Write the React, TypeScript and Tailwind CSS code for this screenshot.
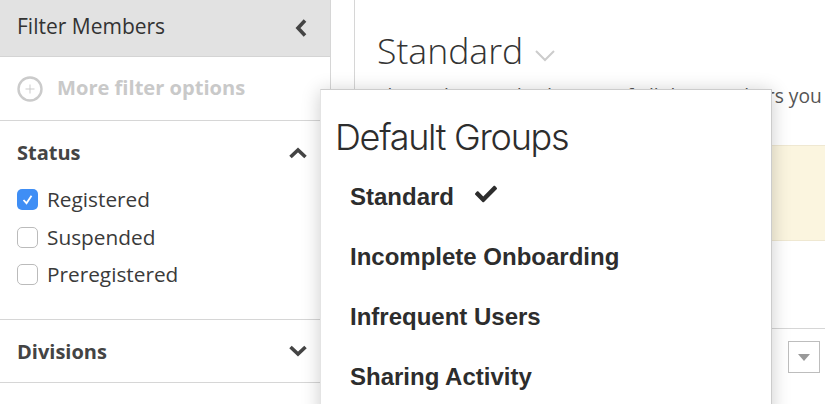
import { FaCheck } from "react-icons/fa";

const open = "font-['Open_Sans',sans-serif]";
const helv = "font-['Liberation_Sans',Arial,sans-serif]";

function Chevron({ dir }: { dir: "up" | "down" | "left" }) {
  if (dir === "left") {
    return (
      <svg width="12" height="18" viewBox="0 0 12 18" fill="none">
        <path d="M10 1.5L3 9l7 7.5" stroke="#444" strokeWidth="3.6" />
      </svg>
    );
  }
  return (
    <svg width="18" height="12" viewBox="0 0 18 12" fill="none">
      <path d={dir === "up" ? "M1.5 10L9 3l7.5 7" : "M1.5 2L9 9l7.5-7"} stroke="#444" strokeWidth="3.6" />
    </svg>
  );
}

function Checkbox({ label, checked }: { label: string; checked?: boolean }) {
  return (
    <label className="flex items-center gap-[9px] h-[37.5px]">
      {checked ? (
        <span className="w-[21px] h-[21px] rounded-[5px] bg-[#3f8ef5] flex items-center justify-center">
          <svg width="13" height="13" viewBox="0 0 13 13" fill="none">
            <path d="M2.5 7l3 3.2L10.5 2.8" stroke="#fff" strokeWidth="1.8" />
          </svg>
        </span>
      ) : (
        <span className="w-[21px] h-[21px] rounded-[5px] bg-white border border-[#bbbbbb]" />
      )}
      <span className="text-[20.8px] leading-none text-[#3a3a3a]">{label}</span>
    </label>
  );
}

function Sidebar() {
  return (
    <aside className={`w-[331px] shrink-0 h-full border-r border-[#d6d6d6] bg-white ${open}`}>
      <div className="h-[57px] bg-[#e2e2e2] border-b border-[#d4d4d4] flex items-center justify-between pl-[17px] pr-[23px]">
        <span className="text-[21px] text-[#333] mb-[2px]">Filter Members</span>
        <Chevron dir="left" />
      </div>
      <div className="h-[64px] border-b border-[#d6d6d6] flex items-center pl-[17px] gap-[14px]">
        <svg width="26" height="26" viewBox="0 0 26 26" fill="none" stroke="#cbcbcb">
          <circle cx="13" cy="13" r="11.5" strokeWidth="2.4" />
          <path d="M13 8.5v9M8.5 13h9" strokeWidth="1" />
        </svg>
        <span className="text-[20.1px] font-bold text-[#c9c9c9]">More filter options</span>
      </div>
      <div className="h-[199px] border-b border-[#d6d6d6] pl-[17px] pr-[23px] pt-[18px]">
        <div className="flex items-center justify-between">
          <span className="text-[20px] font-bold text-[#444] leading-[26px] mt-[1px]">Status</span>
          <Chevron dir="up" />
        </div>
        <div className="mt-[15px] flex flex-col">
          <Checkbox label="Registered" checked />
          <Checkbox label="Suspended" />
          <Checkbox label="Preregistered" />
        </div>
      </div>
      <div className="h-[63px] border-b border-[#d6d6d6] flex items-center justify-between pl-[17px] pr-[23px]">
        <span className="text-[20px] font-bold text-[#444] mt-[1px]">Divisions</span>
        <Chevron dir="down" />
      </div>
    </aside>
  );
}

function Main() {
  return (
    <main className={`ml-[23px] flex-1 h-full border-l border-[#d6d6d6] bg-white overflow-hidden ${open}`}>
      <div className="pl-[22px] pt-[27px] h-[145px]">
        <div className="flex items-center gap-[12px]">
          <span className="text-[35.6px] font-light text-[#333] leading-[46px]">Standard</span>
          <svg width="20" height="12" viewBox="0 0 20 12" fill="none" className="mt-[12px]">
            <path d="M1 1l9 9 9-9" stroke="#cccccc" strokeWidth="2" />
          </svg>
        </div>
        <p className="mt-[11px] text-[19.2px] text-[#555] leading-[24px] whitespace-nowrap">
          This is the standard group of all the members you
        </p>
      </div>
      <div className="h-[96px] bg-[#fbf5df] border-t border-b border-[#efe8d2]" />
      <div className="h-[88px] border-b border-[#d6d6d6]" />
      <div className="flex justify-end pr-[5px] pt-[12px]">
        <div className="w-[32px] h-[32px] border border-[#bdbdbd] flex items-center justify-center">
          <span className="w-0 h-0 border-l-[6px] border-r-[6px] border-t-[7px] border-l-transparent border-r-transparent border-t-[#999]" />
        </div>
      </div>
    </main>
  );
}

function GroupsMenu() {
  const items = ["Incomplete Onboarding", "Infrequent Users", "Sharing Activity"];
  return (
    <div className={`absolute left-[320px] top-[89px] w-[452px] h-[330px] bg-white border border-[#cccccc] border-l-[#e4e4e4] shadow-[0_2px_18px_rgba(0,0,0,0.2)] pl-[14px] pt-[24px] ${helv}`}>
      <h2 className="text-[36px] leading-[46px] font-['Inter',sans-serif] font-light tracking-[-1.3px] text-[#2d2d2d]">
        Default Groups
      </h2>
      <ul className="mt-[7px] pl-[15px] text-[24px] font-bold text-[#2d2d2d]">
        <li className="h-[60px] flex items-center gap-[21px]">
          <span>Standard</span>
          <FaCheck className="text-[22px] mb-[6px]" />
        </li>
        {items.map((name) => (
          <li key={name} className="h-[60px] flex items-center">
            {name}
          </li>
        ))}
      </ul>
    </div>
  );
}

export default function App() {
  return (
    <div className="relative w-[825px] h-[404px] overflow-hidden bg-white flex">
      <Sidebar />
      <Main />
      <GroupsMenu />
    </div>
  );
}
